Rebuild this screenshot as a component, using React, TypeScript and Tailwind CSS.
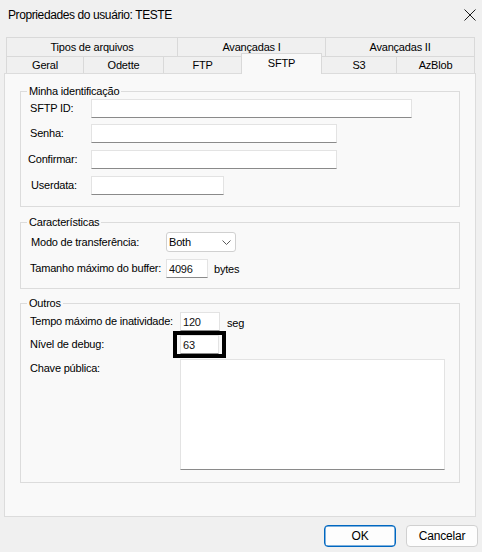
import type { ReactNode } from "react";

const topTabs = [
  { label: "Tipos de arquivos", w: "w-[171px]" },
  { label: "Avançadas I", w: "w-[148px]" },
  { label: "Avançadas II", w: "w-[150px] border-r" },
];

const bottomTabs = [
  { label: "Geral", w: "w-[77px]" },
  { label: "Odette", w: "w-[80px]" },
  { label: "FTP", w: "w-[78px]" },
  { label: "SFTP", w: "w-[81px]", active: true },
  { label: "S3", w: "w-[74px] border-l-0" },
  { label: "AzBlob", w: "w-[79px] border-r" },
];

function TextBox({ width, value = "" }: { width: string; value?: string }) {
  return (
    <input
      readOnly
      value={value}
      className={`h-[19px] ${width} border border-[#e3e3e3] border-b-[#8a8a8a] bg-white px-[2px] text-[11px] tracking-[-0.2px] text-[#101010] outline-none`}
    />
  );
}

function Group({ title, className, children }: { title: string; className: string; children: ReactNode }) {
  return (
    <fieldset className={`mx-[15px] border border-[#dcdcdc] ${className}`}>
      <legend className="ml-[6px] px-[2px] text-[11px] leading-[13px]">{title}</legend>
      {children}
    </fieldset>
  );
}

export default function App() {
  return (
    <div className="h-[552px] w-[482px] overflow-hidden whitespace-nowrap bg-[#f0f0f0] font-['Liberation_Sans',Arial,sans-serif] text-[11px] leading-[13px] tracking-[-0.2px] text-black">
      {/* title bar */}
      <div className="flex h-[30px] items-center justify-between pl-[8px] pr-[6px]">
        <span className="text-[12px] leading-[14px] tracking-[-0.4px]">Propriedades do usuário: TESTE</span>
        <svg width="12" height="12" viewBox="0 0 12 12">
          <path d="M0.5 0.5 L11.5 11.5 M11.5 0.5 L0.5 11.5" stroke="#1b1b1b" strokeWidth="1" fill="none" />
        </svg>
      </div>

      {/* tabs, two rows */}
      <div className="mt-[7px] px-[6px]">
        <div className="flex h-[19px]">
          {topTabs.map((t) => (
            <div
              key={t.label}
              className={`flex items-center justify-center border-t border-l border-[#d9d9d9] ${t.w}`}
            >
              {t.label}
            </div>
          ))}
        </div>
        <div className="flex h-[17px] items-end">
          {bottomTabs.map((t) =>
            t.active ? (
              <div
                key={t.label}
                className={`relative z-10 -mb-[1px] flex h-[21px] items-center justify-center border-x border-t border-[#d9d9d9] bg-[#f9f9f9] pb-[2px] ${t.w}`}
              >
                {t.label}
              </div>
            ) : (
              <div
                key={t.label}
                className={`flex h-[17px] items-center justify-center border-t border-l border-[#d9d9d9] ${t.w}`}
              >
                {t.label}
              </div>
            )
          )}
        </div>
      </div>

      {/* page */}
      <div className="mx-[4px] h-[444px] w-[472px] border border-[#dcdcdc] bg-[#f9f9f9] pt-[11px]">
        <Group title="Minha identificação" className="pt-[1px] pb-[11px]">
          <div className="flex flex-col pl-[9px]">
            <div className="flex h-[19px] items-center">
              <span className="w-[61px]">SFTP ID:</span>
              <TextBox width="w-[321px]" />
            </div>
            <div className="mt-[6px] flex h-[19px] items-center">
              <span className="w-[61px]">Senha:</span>
              <TextBox width="w-[246px]" />
            </div>
            <div className="mt-[7px] flex h-[19px] items-center">
              <span className="-ml-[2px] w-[63px]">Confirmar:</span>
              <TextBox width="w-[246px]" />
            </div>
            <div className="mt-[7px] flex h-[19px] items-center">
              <span className="ml-[1px] w-[60px]">Userdata:</span>
              <TextBox width="w-[133px]" />
            </div>
          </div>
        </Group>

        <Group title="Características" className="mt-[9px] pt-[3px] pb-[10px]">
          <div className="flex flex-col pl-[10px]">
            <div className="flex h-[20px] items-center">
              <span className="w-[135px]">Modo de transferência:</span>
              <div className="flex h-[20px] w-[70px] items-center justify-between rounded-[3px] border border-[#d0d0d0] bg-white pl-[2px] pr-[4px]">
                <span>Both</span>
                <svg width="9" height="5" viewBox="0 0 9 5">
                  <path d="M0.5 0.5 L4.5 4.5 L8.5 0.5" stroke="#5a5a5a" strokeWidth="1" fill="none" />
                </svg>
              </div>
            </div>
            <div className="mt-[7px] flex h-[19px] items-center">
              <span className="-ml-[1px] w-[136px]">Tamanho máximo do buffer:</span>
              <TextBox width="w-[42px]" value="4096" />
              <span className="ml-[6px] mt-[2px]">bytes</span>
            </div>
          </div>
        </Group>

        <Group title="Outros" className="mt-[8px] pt-[2px] pb-[12px]">
          <div className="flex flex-col pl-[9px]">
            <div className="flex h-[19px] items-center">
              <span className="w-[150px]">Tempo máximo de inatividade:</span>
              <TextBox width="w-[40px]" value="120" />
              <span className="ml-[7px] mt-[3px]">seg</span>
            </div>
            <div className="mt-[4px] flex h-[19px] items-center">
              <span className="w-[150px]">Nível de debug:</span>
              <div className="-mx-[7px] -my-[4px] border-4 border-black px-[3px]">
                <TextBox width="w-[39px]" value="63" />
              </div>
            </div>
            <div className="mt-[5px] flex">
              <span className="w-[150px] pt-[3px]">Chave pública:</span>
              <textarea
                readOnly
                className="h-[111px] w-[265px] resize-none border border-[#e3e3e3] border-b-[#8a8a8a] bg-white outline-none"
              />
            </div>
          </div>
        </Group>
      </div>

      {/* dialog buttons */}
      <div className="mt-[8px] flex justify-end gap-[10px] pr-[4px]">
        <button className="flex h-[22px] w-[72px] items-center justify-center rounded-[4px] border border-[#0067c0] bg-[#fdfdfd] text-[12px] shadow-[inset_0_0_0_0.5px_#0067c0]">
          OK
        </button>
        <button className="flex h-[22px] w-[72px] items-center justify-center rounded-[4px] border border-[#d0d0d0] bg-[#fdfdfd] text-[12px]">
          Cancelar
        </button>
      </div>
    </div>
  );
}
